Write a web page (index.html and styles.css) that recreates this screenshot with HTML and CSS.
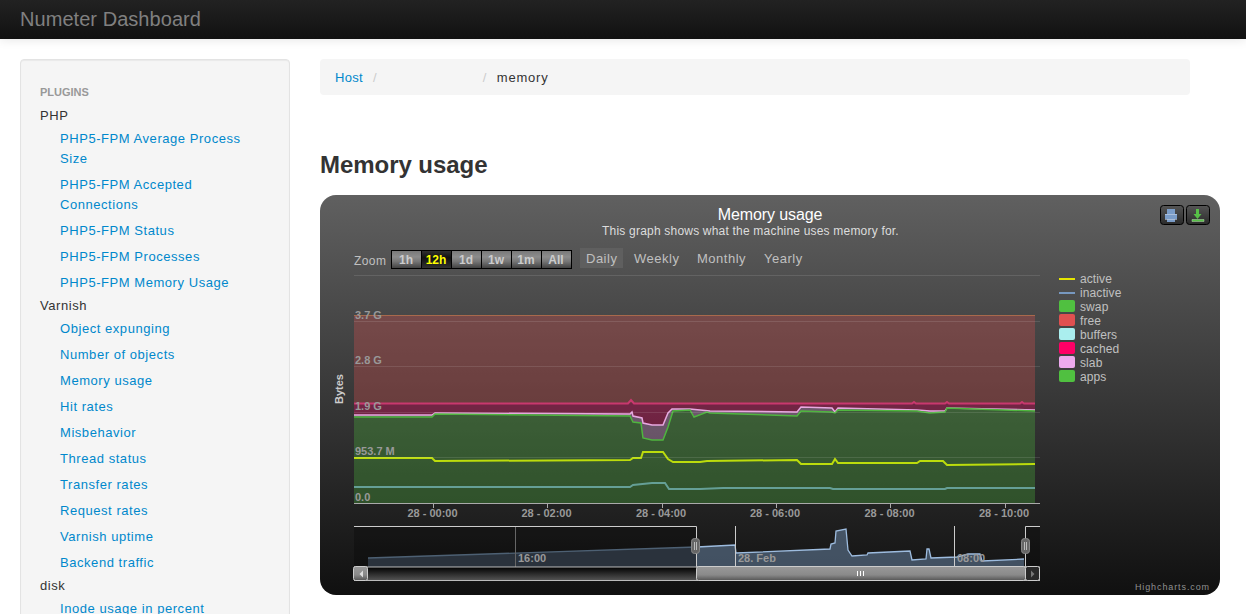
FILE: index.html
```html
<!DOCTYPE html>
<html lang="en">
<head>
<meta charset="utf-8">
<title>Numeter Dashboard</title>
<link rel="stylesheet" href="styles.css">
</head>
<body>
<header class="navbar"><span class="brand">Numeter Dashboard</span></header>
<div class="layout">
  <aside class="sidebar">
    <div class="nav-header">Plugins</div>
    <ul class="plugins">
      <li class="group">PHP
        <ul class="subnav">
          <li><a href="#">PHP5-FPM Average Process Size</a></li>
          <li><a href="#">PHP5-FPM Accepted Connections</a></li>
          <li><a href="#">PHP5-FPM Status</a></li>
          <li><a href="#">PHP5-FPM Processes</a></li>
          <li><a href="#">PHP5-FPM Memory Usage</a></li>
        </ul>
      </li>
      <li class="group">Varnish
        <ul class="subnav">
          <li><a href="#">Object expunging</a></li>
          <li><a href="#">Number of objects</a></li>
          <li><a href="#">Memory usage</a></li>
          <li><a href="#">Hit rates</a></li>
          <li><a href="#">Misbehavior</a></li>
          <li><a href="#">Thread status</a></li>
          <li><a href="#">Transfer rates</a></li>
          <li><a href="#">Request rates</a></li>
          <li><a href="#">Varnish uptime</a></li>
          <li><a href="#">Backend traffic</a></li>
        </ul>
      </li>
      <li class="group">disk
        <ul class="subnav">
          <li><a href="#">Inode usage in percent</a></li>
        </ul>
      </li>
    </ul>
  </aside>
  <main class="content">
    <nav class="breadcrumb">
      <a href="#">Host</a><span class="sep first">/</span><span class="blank"></span><span class="sep">/</span><span class="crumb">memory</span>
    </nav>
    <h2 class="title">Memory usage</h2>
    <svg class="chart" width="900" height="400" viewBox="320 195 900 400" xmlns="http://www.w3.org/2000/svg">
      <defs>
        <linearGradient id="bg" x1="0" y1="0" x2="0" y2="1"><stop offset="0" stop-color="#606060"/><stop offset="1" stop-color="#101010"/></linearGradient>
        <linearGradient id="btn" x1="0" y1="0" x2="0" y2="1"><stop offset="0" stop-color="#777"/><stop offset=".35" stop-color="#8c8c8c"/><stop offset=".6" stop-color="#777"/><stop offset="1" stop-color="#3e3e3e"/></linearGradient>
        <linearGradient id="btnOn" x1="0" y1="0" x2="0" y2="1"><stop offset="0" stop-color="#333"/><stop offset=".4" stop-color="#111"/><stop offset="1" stop-color="#333"/></linearGradient>
        <linearGradient id="exp" x1="0" y1="0" x2="0" y2="1"><stop offset="0" stop-color="#555"/><stop offset="1" stop-color="#2a2a2a"/></linearGradient>
        <linearGradient id="track" x1="0" y1="0" x2="0" y2="1"><stop offset="0" stop-color="#000"/><stop offset="1" stop-color="#555"/></linearGradient>
        <linearGradient id="thumb" x1="0" y1="0" x2="0" y2="1"><stop offset="0" stop-color="#999"/><stop offset=".6" stop-color="#8a8a8a"/><stop offset="1" stop-color="#555"/></linearGradient>
      </defs>
      <rect class="panel" x="320" y="195" width="900" height="400" rx="16" fill="url(#bg)"/>

      <text class="chart-title" x="770" y="220">Memory usage</text>
      <text class="chart-sub" x="750.500" y="235">This graph shows what the machine uses memory for.</text>

      <g class="export">
        <rect x="1160.500" y="205.500" width="23" height="19" rx="3" fill="url(#exp)"/>
        <rect x="1186.500" y="205.500" width="23" height="19" rx="3" fill="url(#exp)"/>
      </g>
      <path class="ico-print" d="M1167 209h8v5h2v5h-2v3h-8v-3h-2v-5h2z"/>
      <path class="ico-print-line" d="M1165 214.500h12M1165 219.500h12"/>
      <path class="ico-down" d="M1196 209h3v5h2.500l-4 5l-4-5h2.500z"/>
      <path class="ico-tray" d="M1192 219.500h12v2h-12z"/>

      <text class="zoom-label" x="354" y="265">Zoom</text>
      <g class="range">
        <rect x="391.500" y="250.500" width="30" height="18" fill="url(#btn)"/>
        <rect x="421.500" y="250.500" width="30" height="18" fill="url(#btnOn)"/>
        <rect x="451.500" y="250.500" width="30" height="18" fill="url(#btn)"/>
        <rect x="481.500" y="250.500" width="30" height="18" fill="url(#btn)"/>
        <rect x="511.500" y="250.500" width="30" height="18" fill="url(#btn)"/>
        <rect x="541.500" y="250.500" width="30" height="18" fill="url(#btn)"/>
      </g>
      <g class="range-text">
        <text x="406" y="264">1h</text>
        <text class="on" x="436" y="264">12h</text>
        <text x="466" y="264">1d</text>
        <text x="496" y="264">1w</text>
        <text x="526" y="264">1m</text>
        <text x="556" y="264">All</text>
      </g>
      <rect class="tab-on" x="580" y="248" width="43" height="20"/>
      <g class="tabs">
        <text x="586" y="263">Daily</text>
        <text x="634" y="263">Weekly</text>
        <text x="697" y="263">Monthly</text>
        <text x="764" y="263">Yearly</text>
      </g>

      <path class="free-line" d="M354 315.500H1035"/>
      <path class="a-free" d="M354 316H1035V403H354z"/>
      <path class="a-cached" d="M354 403H1035V410L947 408L945 411L930 411L917 410L838 408L835 412L832 408L801 407L797 412L710 411L690 409L672 409L668 413L663 425L652 425L643 423L642 418L633 416L632 412L630 414L435 413L432 415L417 415L354 415z"/>
      <path class="a-slab" d="M354 415L417 415L432 415L435 413L630 414L632 412L633 416L642 418L643 423L652 425L663 425L668 413L672 409L690 409L710 411L797 412L801 407L832 408L835 412L838 408L917 410L930 411L945 411L947 408L1035 410V411L947 408L945 412L930 413L917 411L838 410L835 413L832 412L801 411L797 416L710 413L707 412L694 417L690 410L673 411L668 427L663 440L652 440L643 438L641 423L633 422L630 416L435 414L432 417L417 417L354 417z"/>
      <path class="a-apps" d="M354 417L417 417L432 417L435 414L630 416L633 422L641 423L643 438L652 440L663 440L668 427L673 411L690 410L694 417L707 412L710 413L797 416L801 411L832 412L835 413L838 410L917 411L930 413L945 412L947 408L1035 411V503H354z"/>
      <path class="l-cached" d="M354 403.500H628L631 400L634 403.500H690H912L914 402L916 403.500H945L947 402L949 403.500H1020L1022 402L1024 403.500H1035"/>
      <path class="l-slab" d="M354 415L417 415L432 415L435 413L630 414L632 412L633 416L642 418L643 423L652 425L663 425L668 413L672 409L690 409L710 411L797 412L801 407L832 408L835 412L838 408L917 410L930 411L945 411L947 408L1035 410"/>
      <path class="l-apps" d="M354 417L417 417L432 417L435 414L630 416L633 422L641 423L643 438L652 440L663 440L668 427L673 411L690 410L694 417L707 412L710 413L797 416L801 411L832 412L835 413L838 410L917 411L930 413L945 412L947 408L1035 411"/>
      <path class="l-active" d="M354 458L432 458L435 461L630 460L633 458L641 458L643 452L663 452L668 459L673 462L700 462L707 461L797 460L801 464L832 464L835 459L838 463L917 463L920 461L943 461L947 465L1035 464"/>
      <path class="l-inactive" d="M354 487L630 487L633 485L652 483L665 483L669 489L700 489L723 488L830 488L833 489L945 489L947 488L1035 488"/>

      <path class="grid" d="M354 275.500H1040M354 321.500H1040M354 366.500H1040M354 412.500H1040M354 457.500H1040"/>
      <path class="axis" d="M354 503.500H1040M433.500 503V508M547.500 503V508M662.500 503V508M776.500 503V508M890.500 503V508M1005.500 503V508"/>

      <g class="y-labels">
        <text x="355" y="319">3.7 G</text>
        <text x="355" y="364">2.8 G</text>
        <text x="355" y="410">1.9 G</text>
        <text x="355" y="455">953.7 M</text>
        <text x="355" y="501">0.0</text>
      </g>
      <text class="y-title" transform="translate(343 389) rotate(-90)">Bytes</text>
      <g class="x-labels">
        <text x="432.500" y="517">28 - 00:00</text>
        <text x="546.500" y="517">28 - 02:00</text>
        <text x="661" y="517">28 - 04:00</text>
        <text x="775" y="517">28 - 06:00</text>
        <text x="889.500" y="517">28 - 08:00</text>
        <text x="1004" y="517">28 - 10:00</text>
      </g>

      <g class="legend-text">
        <text x="1080" y="283">active</text>
        <text x="1080" y="297">inactive</text>
        <text x="1080" y="311">swap</text>
        <text x="1080" y="325">free</text>
        <text x="1080" y="339">buffers</text>
        <text x="1080" y="353">cached</text>
        <text x="1080" y="367">slab</text>
        <text x="1080" y="381">apps</text>
      </g>
      <path class="key-active" d="M1059 279H1075"/>
      <path class="key-inactive" d="M1059 293H1075"/>
      <rect class="key-swap" x="1059" y="300" width="16" height="12" rx="2"/>
      <rect class="key-free" x="1059" y="314" width="16" height="12" rx="2"/>
      <rect class="key-buffers" x="1059" y="328" width="16" height="12" rx="2"/>
      <rect class="key-cached" x="1059" y="342" width="16" height="12" rx="2"/>
      <rect class="key-slab" x="1059" y="356" width="16" height="12" rx="2"/>
      <rect class="key-apps" x="1059" y="370" width="16" height="12" rx="2"/>

      <rect class="nav-mask" x="354" y="526" width="342" height="41"/>
      <rect class="nav-mask" x="1026" y="526" width="14" height="41"/>
      <path class="nav-area-dim" d="M368 558L696 547V567H368z"/>
      <path class="nav-area" d="M697 547L735 545L736 553L830 549L831 544L835 543L836 531L846 529L848 550L852 556L867 555L868 553L910 551L912 560L926 559L927 549L929 549L931 558L957 557L968 554L980 554L982 561L1024 559V567H697z"/>
      <path class="nav-line" d="M697 547L735 545L736 553L830 549L831 544L835 543L836 531L846 529L848 550L852 556L867 555L868 553L910 551L912 560L926 559L927 549L929 549L931 558L957 557L968 554L980 554L982 561L1024 559"/>
      <path class="nav-line-dim" d="M368 558L696 547"/>
      <path class="nav-grid-dim" d="M515.500 526V567"/>
      <path class="nav-grid" d="M735.500 526V567M954.500 526V567"/>
      <g class="nav-labels">
        <text x="518" y="562">16:00</text>
        <text x="738" y="562">28. Feb</text>
        <text x="957" y="562">08:00</text>
      </g>
      <path class="nav-border" d="M354 526.500H696.500V567M1025.500 567V526.500H1040"/>

      <rect class="scroll-track" x="354.500" y="567" width="685" height="13.500" fill="url(#track)"/>
      <rect class="scroll-part" x="353.500" y="566.500" width="14" height="14" rx="2" fill="url(#thumb)"/>
      <rect class="scroll-part" x="696.500" y="566.500" width="329" height="14" rx="2" fill="url(#thumb)"/>
      <rect class="scroll-end" x="1025.500" y="566.500" width="14" height="14" rx="2"/>
      <path class="scroll-arrow" d="M363 570.500v7l-3.500-3.500z"/>
      <path class="scroll-arrow-end" d="M1031 570.500v7l3.500-3.500z"/>
      <path class="scroll-grip" d="M857.500 571v5M860.500 571v5M863.500 571v5"/>
      <rect class="handle" x="691.500" y="538.500" width="8" height="15" rx="3"/>
      <rect class="handle" x="1021.500" y="538.500" width="8" height="15" rx="3"/>
      <path class="handle-grip" d="M694.500 542v8M696.500 542v8M1024.500 542v8M1026.500 542v8"/>

      <text class="credits" x="1210" y="590">Highcharts.com</text>
    </svg>
  </main>
</div>
</body>
</html>
```

FILE: styles.css
```css
* { box-sizing: border-box; }
html, body { height: 100%; }
body {
  margin: 0;
  overflow: hidden;
  background: #fff;
  color: #333;
  font: 13px/20px "Liberation Sans", Arial, sans-serif;
  letter-spacing: .55px;
}
a { color: #08c; text-decoration: none; }
ul { list-style: none; margin: 0; padding: 0; }

.navbar {
  height: 39px;
  padding: 0 20px;
  display: flex;
  align-items: center;
  background: linear-gradient(#222, #111);
  box-shadow: 0 1px 10px rgba(0,0,0,.1);
}
.brand { color: #808080; font-size: 20px; font-weight: 200; letter-spacing: .05px; margin-top: -1px; }

.layout { display: flex; gap: 30px; padding: 20px 20px 0; }

.sidebar {
  flex: 0 0 270px;
  padding: 19px;
  background: #f5f5f5;
  border: 1px solid #e3e3e3;
  border-radius: 4px;
  box-shadow: inset 0 1px 1px rgba(0,0,0,.05);
}
.nav-header {
  padding: 3px 0 4px;
  font-size: 11px;
  font-weight: bold;
  line-height: 20px;
  letter-spacing: 0;
  color: #999;
  text-transform: uppercase;
}
.subnav { padding-left: 20px; }
.subnav a { display: block; padding: 3px 0; }

.content { flex: 0 0 870px; min-width: 0; }
.breadcrumb {
  display: flex;
  align-items: center;
  height: 36px;
  padding: 2px 15px 0;
  background: #f5f5f5;
  border-radius: 4px;
  letter-spacing: .3px;
}
.sep { color: #ccc; margin: 0 0 0 10px; }
.sep.first { margin-right: 0; }
.blank { width: 96px; }
.crumb { margin-left: 10px; letter-spacing: .8px; }

.title {
  margin: 50px 0 10px;
  font-size: 24px;
  line-height: 40px;
  font-weight: bold;
  letter-spacing: -.05px;
  color: #333;
}

.chart { display: block; overflow: visible; font-family: "Liberation Sans", Arial, sans-serif; letter-spacing: 0; }
.chart-title { fill: #fff; font-size: 16px; text-anchor: middle; letter-spacing: -.1px; }
.chart-sub { fill: #ddd; font-size: 12px; text-anchor: middle; letter-spacing: .2px; }
.export rect { stroke: #000; }
.ico-print { fill: #7a9cc8; }
.ico-print-line { stroke: #c8d4e4; fill: none; opacity: .6; }
.ico-down { fill: #57c047; }
.ico-tray { fill: #57c047; stroke: #b8d8b0; stroke-width: .5; }

.zoom-label { fill: silver; font-size: 12px; letter-spacing: .4px; }
.range rect { stroke: #000; }
.range-text text { fill: #ccc; font-size: 12px; font-weight: bold; text-anchor: middle; }
.range-text .on { fill: #ff0; }
.tab-on { fill: #5f5f5f; }
.tabs text { fill: silver; font-size: 13px; letter-spacing: .5px; }

.free-line { stroke: #a8694c; fill: none; }
.a-free { fill: rgba(224,80,80,.3); }
.a-cached { fill: rgba(255,0,102,.3); }
.a-slab { fill: rgba(240,170,235,.3); }
.a-apps { fill: rgba(80,192,64,.3); }
.l-cached { stroke: #c8386e; fill: none; stroke-width: 2; }
.l-slab { stroke: #e8a8e0; fill: none; stroke-width: 1.5; }
.l-apps { stroke: #4fb53f; fill: none; stroke-width: 1.5; }
.l-active { stroke: #bcdc0c; fill: none; stroke-width: 2; }
.l-inactive { stroke: #659f96; fill: none; stroke-width: 2; }
.grid { stroke: rgba(255,255,255,.11); fill: none; }
.axis { stroke: #aaa; fill: none; }
.y-labels text { fill: #999; font-size: 11px; font-weight: bold; }
.y-title { fill: #ccc; font-size: 11px; font-weight: bold; text-anchor: middle; }
.x-labels text { fill: #999; font-size: 11px; font-weight: bold; text-anchor: middle; }
.legend-text text { fill: silver; font-size: 12px; letter-spacing: .1px; }
.key-active { stroke: #e6e600; stroke-width: 2; }
.key-inactive { stroke: #7798bf; stroke-width: 2; }
.key-swap, .key-apps { fill: #50c040; }
.key-free { fill: #e05050; }
.key-buffers { fill: #aaeeee; }
.key-cached { fill: #ff0066; }
.key-slab { fill: #eeaaee; }

.nav-mask { fill: rgba(0,0,0,.25); }
.nav-area { fill: rgba(119,152,191,.45); }
.nav-area-dim { fill: #2a323c; }
.nav-line { stroke: #9dbcdf; fill: none; stroke-width: 1.3; }
.nav-line-dim { stroke: #4d6073; fill: none; stroke-width: 1.3; }
.nav-grid { stroke: #ccc; fill: none; }
.nav-grid-dim { stroke: #666; fill: none; }
.nav-labels text { fill: #999; font-size: 11px; font-weight: bold; }
.nav-border { stroke: #ccc; fill: none; }
.scroll-track { stroke: #bbb; }
.scroll-part { stroke: #ccc; }
.scroll-end { fill: #2a2a2a; stroke: #ccc; }
.scroll-arrow { fill: #ddd; }
.scroll-arrow-end { fill: #777; }
.scroll-grip { stroke: #fff; fill: none; }
.handle { fill: #666; stroke: #888; }
.handle-grip { stroke: #bbb; fill: none; }
.credits { fill: #909090; font-size: 9px; text-anchor: end; letter-spacing: .9px; }
```
